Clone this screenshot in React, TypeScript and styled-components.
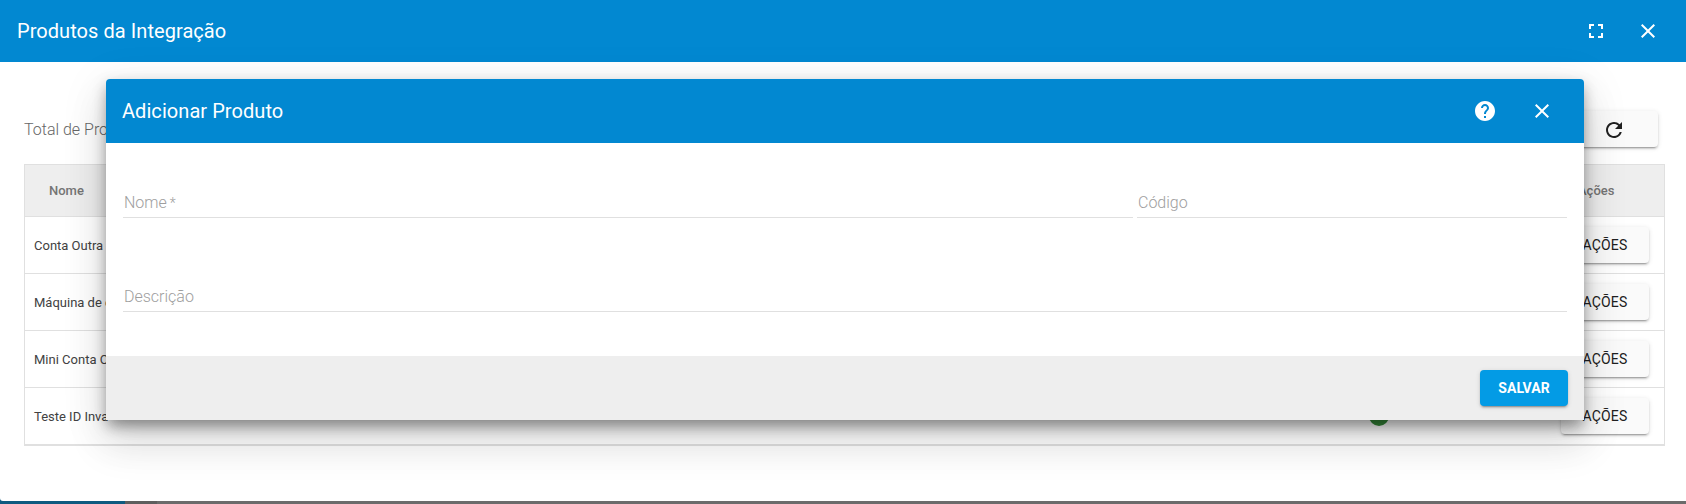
import React from 'react';
import styled, { createGlobalStyle } from 'styled-components';
import { MdClose, MdFullscreen, MdHelp, MdRefresh, MdCheck } from 'react-icons/md';

const GlobalStyle = createGlobalStyle`
    html, body {
        margin: 0;
        padding: 0;
        background: #fff;
        font-family: Roboto, "Liberation Sans", sans-serif;
    }
`
const Page = styled.div`
    position: relative;
    width: 1686px;
    height: 504px;
    overflow: hidden;
    display: flex;
    flex-direction: column;
`
const Dialog = styled.div`
    position: relative;
    z-index: 1;
    flex: 1;
    display: flex;
    flex-direction: column;
    background: #fff;
    border-bottom-left-radius: 3px;
`
const Header = styled.div<{ $height: number; $left: number; $right: number }>`
    height: ${p => p.$height}px;
    flex: none;
    display: flex;
    align-items: center;
    justify-content: space-between;
    padding: 0 ${p => p.$right}px 0 ${p => p.$left}px;
    background: #0288d1;
    color: #fff;
`
const Title = styled.h2`
    margin: 0;
    font-size: 20px;
    font-weight: 400;
    letter-spacing: 0.06px;
    line-height: 24px;
`
const HeaderActions = styled.div<{ $gap: number }>`
    display: flex;
    align-items: center;
    gap: ${p => p.$gap}px;
`
const IconButton = styled.button`
    width: 24px;
    height: 24px;
    padding: 0;
    border: none;
    background: none;
    color: #fff;
    cursor: pointer;
    display: flex;
    svg {
        width: 24px;
        height: 24px;
    }
`
const Content = styled.div`
    padding: 49px 21px 0 24px;
`
const Toolbar = styled.div`
    height: 36px;
    display: flex;
    align-items: center;
    justify-content: space-between;
    padding: 0 7px 0 0;
    margin-bottom: 17px;
`
const Total = styled.span`
    white-space: nowrap;
    font-size: 16px;
    font-weight: 300;
    color: #666;
`
const RefreshButton = styled.button`
    width: 88px;
    height: 36px;
    padding: 2px 0 0;
    border: none;
    border-radius: 4px;
    background: #fafafa;
    color: #212121;
    display: flex;
    align-items: center;
    justify-content: center;
    box-shadow: 0 3px 1px -2px rgba(0,0,0,.2), 0 2px 2px 0 rgba(0,0,0,.14), 0 1px 5px 0 rgba(0,0,0,.12);
    svg {
        width: 24px;
        height: 24px;
    }
`
const Table = styled.div`
    border: 1px solid #e0e0e0;
    border-bottom-width: 2px;
`
const Row = styled.div<{ $head?: boolean }>`
    height: ${p => (p.$head ? 51 : 56)}px;
    display: grid;
    grid-template-columns: 1336px 1fr 103px;
    align-items: center;
    background: ${p => (p.$head ? '#eeeeee' : '#fff')};
    border-bottom: 1px solid #e0e0e0;
    &:last-child {
        border-bottom: none;
    }
`
const HeadCell = styled.div<{ $inset: number }>`
    padding-left: ${p => p.$inset}px;
    font-size: 13px;
    font-weight: 500;
    color: #757575;
`
const NameCell = styled.div`
    padding-left: 9px;
    white-space: nowrap;
    font-size: 13px;
    color: #424242;
`
const StatusCell = styled.div`
    display: flex;
    padding-left: 8px;
`
const StatusDot = styled.span`
    width: 20px;
    height: 20px;
    border-radius: 50%;
    background: #388e3c;
    color: #fff;
    display: flex;
    align-items: center;
    justify-content: center;
`
const ActionsButton = styled.button`
    width: 88px;
    height: 36px;
    padding: 0;
    border: none;
    border-radius: 4px;
    background: #fafafa;
    color: #212121;
    font-family: inherit;
    font-size: 14px;
    font-weight: 400;
    letter-spacing: 0.2px;
    box-shadow: 0 3px 1px -2px rgba(0,0,0,.2), 0 2px 2px 0 rgba(0,0,0,.14), 0 1px 5px 0 rgba(0,0,0,.12);
`
const Modal = styled.div`
    position: absolute;
    z-index: 2;
    left: 106px;
    top: 79px;
    width: 1478px;
    height: 341px;
    display: flex;
    flex-direction: column;
    background: #fff;
    border-radius: 4px;
    box-shadow: 0 6px 14px rgba(0,0,0,.28), 0 11px 15px -7px rgba(0,0,0,.2), 0 24px 38px 3px rgba(0,0,0,.1), 0 9px 46px 8px rgba(0,0,0,.06);
    & > ${Header} {
        border-radius: 4px 4px 0 0;
    }
`
const ModalBody = styled.div`
    flex: 1;
    display: flex;
    flex-direction: column;
    gap: 64px;
    padding: 45px 17px 0;
`
const FieldRow = styled.div`
    display: grid;
    grid-template-columns: 1010px 430px;
    column-gap: 4px;
`
const FieldFull = styled.div`
    grid-column: 1 / -1;
`
const Field = styled.label`
    box-sizing: border-box;
    display: flex;
    align-items: center;
    height: 30px;
    padding-left: 1px;
    border-bottom: 1px solid #e0e0e0;
    font-size: 16px;
    font-weight: 300;
    color: #9e9e9e;
`
const Required = styled.span`
    margin-left: 3px;
    font-size: 14px;
`
const Footer = styled.div`
    height: 64px;
    flex: none;
    display: flex;
    align-items: center;
    justify-content: flex-end;
    padding-right: 16px;
    background: #eeeeee;
`
const SaveButton = styled.button`
    width: 88px;
    height: 36px;
    padding: 0;
    border: none;
    border-radius: 4px;
    background: #039be5;
    color: #fff;
    font-family: inherit;
    font-size: 14px;
    font-weight: 700;
    box-shadow: 0 3px 1px -2px rgba(0,0,0,.2), 0 2px 2px 0 rgba(0,0,0,.14), 0 1px 5px 0 rgba(0,0,0,.12);
`
const BackStrip = styled.div`
    height: 6px;
    margin-top: -3px;
    flex: none;
    display: flex;
    background: #6b6b6b;
`
const StripPart = styled.div<{ $width: number; $color: string }>`
    width: ${p => p.$width}px;
    background: ${p => p.$color};
`

// only what the modal leaves visible
const products = ['Conta Outra V', 'Máquina de c', 'Mini Conta O', 'Teste ID Inva'];

const App: React.FC = () => {
    return (
        <Page>
            <GlobalStyle />
            <Dialog>
                <Header $height={62} $left={17} $right={26}>
                    <Title>Produtos da Integração</Title>
                    <HeaderActions $gap={28}>
                        <IconButton><MdFullscreen /></IconButton>
                        <IconButton><MdClose /></IconButton>
                    </HeaderActions>
                </Header>
                <Content>
                    <Toolbar>
                        <Total>Total de Pro</Total>
                        <RefreshButton><MdRefresh /></RefreshButton>
                    </Toolbar>
                    <Table>
                        <Row $head>
                            <HeadCell $inset={24}>Nome</HeadCell>
                            <HeadCell $inset={0}></HeadCell>
                            <HeadCell $inset={17}>Ações</HeadCell>
                        </Row>
                        {products.map(name => (
                            <Row key={name}>
                                <NameCell>{name}</NameCell>
                                <StatusCell>
                                    <StatusDot><MdCheck size={14} /></StatusDot>
                                </StatusCell>
                                <ActionsButton>AÇÕES</ActionsButton>
                            </Row>
                        ))}
                    </Table>
                </Content>
            </Dialog>
            <BackStrip>
                <StripPart $width={125} $color="#0f5a80" />
                <StripPart $width={32} $color="#5e5e5e" />
            </BackStrip>
            <Modal>
                <Header $height={64} $left={16} $right={30}>
                    <Title>Adicionar Produto</Title>
                    <HeaderActions $gap={33}>
                        <IconButton><MdHelp /></IconButton>
                        <IconButton><MdClose /></IconButton>
                    </HeaderActions>
                </Header>
                <ModalBody>
                    <FieldRow>
                        <Field>Nome<Required>*</Required></Field>
                        <Field>Código</Field>
                    </FieldRow>
                    <FieldRow>
                        <FieldFull>
                            <Field>Descrição</Field>
                        </FieldFull>
                    </FieldRow>
                </ModalBody>
                <Footer>
                    <SaveButton>SALVAR</SaveButton>
                </Footer>
            </Modal>
        </Page>
    );
};

export default App;
